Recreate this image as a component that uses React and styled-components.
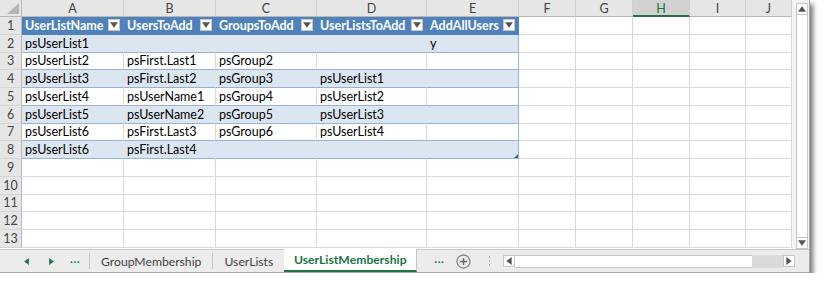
import React from 'react'
import styled, { createGlobalStyle, css } from 'styled-components'

const GlobalStyle = createGlobalStyle`
  html, body { margin: 0; padding: 0; background: #fff; }
  body { font-family: Lato, "Open Sans", sans-serif; }
`;

const GREEN = '#217346';
const GRID = '#dadada';
const HEAD_BG = '#e6e6e6';
const TBL_HEAD = '#4f81bd';
const TBL_BAND = '#dce6f1';
const TBL_LINE = '#95b3d7';

const COLS = [
  { key: 'A', width: 102 },
  { key: 'B', width: 92 },
  { key: 'C', width: 101 },
  { key: 'D', width: 110 },
  { key: 'E', width: 92 },
  { key: 'F', width: 57 },
  { key: 'G', width: 57 },
  { key: 'H', width: 57, active: true },
  { key: 'I', width: 56 },
  { key: 'J', width: 46 },
];

const HEADERS = ['UserListName', 'UsersToAdd', 'GroupsToAdd', 'UserListsToAdd', 'AddAllUsers'];

const ROWS = [
  ['psUserList1', '', '', '', 'y'],
  ['psUserList2', 'psFirst.Last1', 'psGroup2', '', ''],
  ['psUserList3', 'psFirst.Last2', 'psGroup3', 'psUserList1', ''],
  ['psUserList4', 'psUserName1', 'psGroup4', 'psUserList2', ''],
  ['psUserList5', 'psUserName2', 'psGroup5', 'psUserList3', ''],
  ['psUserList6', 'psFirst.Last3', 'psGroup6', 'psUserList4', ''],
  ['psUserList6', 'psFirst.Last4', '', '', ''],
];

const TOTAL_ROWS = 13;

const Window = styled.div`
  width: 809px;
  height: 272px;
  border-right: 1px solid #a8a8a8;
  border-bottom: 1px solid #a8a8a8;
  background: #fff;
  display: flex;
  flex-direction: column;
  box-shadow: 3px 4px 5px rgba(0, 0, 0, 0.55);
  font-size: 12.5px;
  color: #000;
`;

const Main = styled.div`
  flex: 1;
  display: flex;
  min-height: 0;
`;

const Sheet = styled.div`
  display: grid;
  grid-template-columns: 22px ${COLS.map(c => `${c.width}px`).join(' ')};
  grid-template-rows: 17px repeat(${TOTAL_ROWS}, 17.75px);
  align-content: start;
  border-bottom: 1px solid #c6c6c6;
`;

const Corner = styled.div`
  background: ${HEAD_BG};
  border-right: 1px solid #b8b8b8;
  border-bottom: 1px solid #b8b8b8;
  display: flex;
  align-items: flex-end;
  justify-content: flex-end;
  padding: 0 2px 2px 0;
`;

const ColHead = styled.div`
  background: ${p => (p.$active ? '#d2d2d2' : HEAD_BG)};
  color: ${p => (p.$active ? GREEN : '#444')};
  border-right: 1px solid #d0d0d0;
  border-bottom: ${p => (p.$active ? `2px solid ${GREEN}` : '1px solid #b8b8b8')};
  display: flex;
  align-items: center;
  justify-content: center;
  padding-top: 1px;
`;

const RowHead = styled.div`
  background: ${HEAD_BG};
  color: #444;
  border-right: 1px solid #b8b8b8;
  border-bottom: 1px solid #d4d4d4;
  display: flex;
  align-items: center;
  justify-content: center;
`;

const kinds = {
  head: css`
    background: ${TBL_HEAD};
    color: #fff;
    font-weight: 700;
    border-right: 1px solid ${TBL_HEAD};
    border-bottom: 1px solid ${TBL_HEAD};
    justify-content: space-between;
    padding-right: 3px;
  `,
  band: css`
    background: ${TBL_BAND};
    border-right: 1px solid ${TBL_BAND};
    border-bottom: 1px solid ${TBL_LINE};
  `,
  white: css`
    background: #fff;
    border-right: 1px solid ${GRID};
    border-bottom: 1px solid ${TBL_LINE};
  `,
  plain: css`
    background: #fff;
    border-right: 1px solid ${GRID};
    border-bottom: 1px solid ${GRID};
  `,
};

const Cell = styled.div`
  position: relative;
  display: flex;
  align-items: center;
  padding-left: 3px;
  white-space: nowrap;
  overflow: hidden;
  ${p => kinds[p.$kind]}
  ${p => p.$edge && css`border-right-color: ${TBL_LINE};`}
  ${p => p.$handle && css`
    &::after {
      content: '';
      position: absolute;
      right: 0;
      bottom: 0;
      border-style: solid;
      border-width: 0 0 4px 4px;
      border-color: transparent transparent #3a67a6 transparent;
    }
  `}
`;

const FilterButton = styled.span`
  width: 12px;
  height: 12px;
  box-sizing: border-box;
  background: #fff;
  border: 1px solid #c8c8c8;
  display: flex;
  align-items: center;
  justify-content: center;
  flex-shrink: 0;
`;

const VScroll = styled.div`
  width: 17px;
  background: #f3f3f3;
  display: flex;
  flex-direction: column;
  padding: 3px 1px 0 4px;
  box-sizing: border-box;
  border-bottom: 1px solid #c6c6c6;
`;

const ScrollButton = styled.div`
  width: 12px;
  height: 12px;
  box-sizing: border-box;
  background: #fff;
  border: 1px solid #c6c6c6;
  display: flex;
  align-items: center;
  justify-content: center;
  flex-shrink: 0;
`;

const VTrack = styled.div`
  flex: 1;
  width: 12px;
  box-sizing: border-box;
  background: #fff;
  border-left: 1px solid #c6c6c6;
  border-right: 1px solid #c6c6c6;
`;

const TabBar = styled.div`
  height: 22px;
  background: #ececec;
  display: flex;
  align-items: center;
  padding-left: 24px;
  color: #444;
  font-size: 12.2px;
`;

const NavButton = styled.span`
  display: flex;
  align-items: center;
  width: ${p => p.$w || 25}px;
  height: 100%;
`;

const More = styled.span`
  color: ${GREEN};
  font-weight: 700;
  letter-spacing: 0.5px;
  width: ${p => p.$w}px;
  line-height: 1;
  padding-bottom: 3px;
`;

const Divider = styled.span`
  width: 1px;
  height: 16px;
  background: #c6c6c6;
`;

const Tab = styled.span`
  height: 100%;
  display: flex;
  align-items: center;
  padding: 0 ${p => p.$pad || 12}px;
  box-sizing: border-box;
  ${p => p.$active && css`
    background: #fff;
    color: ${GREEN};
    font-weight: 700;
    border-bottom: 2px solid ${GREEN};
    border-right: 1px solid #c6c6c6;
    padding: 0 10px;
    margin-top: -1px;
    height: 23px;
    width: 133px;
    justify-content: center;
  `}
`;

const TabGap = styled.span`
  width: ${p => p.$w}px;
`;

const HScroll = styled.div`
  margin-left: 12px;
  width: 292px;
  height: 13px;
  display: flex;
`;

const HTrack = styled.div`
  flex: 1;
  background: #fff;
  border-top: 1px solid #c6c6c6;
  border-bottom: 1px solid #c6c6c6;
`;

const HThumb = styled.div`
  width: 31px;
  background: #dadada;
`;

const Tri = ({ dir, color = '#555', size = 5 }) => {
  const pts = {
    up: '0,4 3,0 6,4',
    down: '0,0 6,0 3,4',
    left: '4,0 4,6 0,3',
    right: '0,0 0,6 4,3',
  }[dir];
  const vertical = dir === 'up' || dir === 'down';
  return (
    <svg width={vertical ? size + 1 : size - 1} height={vertical ? size - 1 : size + 1} viewBox={vertical ? '0 0 6 4' : '0 0 4 6'}>
      <polygon points={pts} fill={color} />
    </svg>
  );
};

const PlusCircle = () => (
  <svg width="15" height="15" viewBox="0 0 15 15">
    <circle cx="7.5" cy="7.5" r="6.5" fill="none" stroke="#8a8a8a" strokeWidth="1.3" />
    <path d="M7.5 4v7M4 7.5h7" stroke="#6a6a6a" strokeWidth="1.5" />
  </svg>
);

const DotSep = () => (
  <svg width="3" height="12" viewBox="0 0 3 12">
    <rect x="1" y="1" width="1" height="2" fill="#b0b0b0" />
    <rect x="1" y="5" width="1" height="2" fill="#b0b0b0" />
    <rect x="1" y="9" width="1" height="2" fill="#b0b0b0" />
  </svg>
);

const CornerMark = () => (
  <svg width="12" height="11" viewBox="0 0 12 11">
    <polygon points="12,0 12,11 0,11" fill="#b5b5b5" />
  </svg>
);

function rowKind(r) {
  if (r === 1) return 'head';
  if (r <= 8) return r % 2 === 0 ? 'band' : 'white';
  return 'plain';
}

const App = () => {
  const cells = [];
  cells.push(<Corner key="corner"><CornerMark /></Corner>);
  COLS.forEach(c => cells.push(<ColHead key={`h${c.key}`} $active={c.active}>{c.key}</ColHead>));

  for (let r = 1; r <= TOTAL_ROWS; r++) {
    cells.push(<RowHead key={`r${r}`}>{r}</RowHead>);
    COLS.forEach((c, ci) => {
      const inTable = ci < 5 && r <= 8;
      const kind = inTable ? rowKind(r) : 'plain';
      let content = '';
      if (r === 1 && ci < 5) {
        content = (
          <>
            <span>{HEADERS[ci]}</span>
            <FilterButton><Tri dir="down" color="#555" size={7} /></FilterButton>
          </>
        );
      } else if (inTable) {
        content = ROWS[r - 2][ci];
      }
      cells.push(
        <Cell
          key={`c${r}${c.key}`}
          $kind={kind}
          $edge={inTable && ci === 4 && r > 1}
          $handle={r === 8 && ci === 4}
        >
          {content}
        </Cell>
      );
    });
  }

  return (
    <>
      <GlobalStyle />
      <Window>
        <Main>
          <Sheet>{cells}</Sheet>
          <VScroll>
            <ScrollButton><Tri dir="up" size={7} /></ScrollButton>
            <VTrack />
            <ScrollButton><Tri dir="down" size={7} /></ScrollButton>
          </VScroll>
        </Main>
        <TabBar>
          <NavButton $w={25}><Tri dir="left" color={GREEN} size={6} /></NavButton>
          <NavButton $w={21}><Tri dir="right" color={GREEN} size={6} /></NavButton>
          <More $w={19}>...</More>
          <Divider />
          <Tab $pad={11}>GroupMembership</Tab>
          <Divider />
          <Tab $pad={11}>UserLists</Tab>
          <Tab $active>UserListMembership</Tab>
          <TabGap $w={17} />
          <More $w={22}>...</More>
          <PlusCircle />
          <TabGap $w={17} />
          <DotSep />
          <HScroll>
            <ScrollButton><Tri dir="left" size={7} /></ScrollButton>
            <HTrack />
            <HThumb />
            <ScrollButton><Tri dir="right" size={7} /></ScrollButton>
          </HScroll>
        </TabBar>
      </Window>
    </>
  );
};

export default App;
